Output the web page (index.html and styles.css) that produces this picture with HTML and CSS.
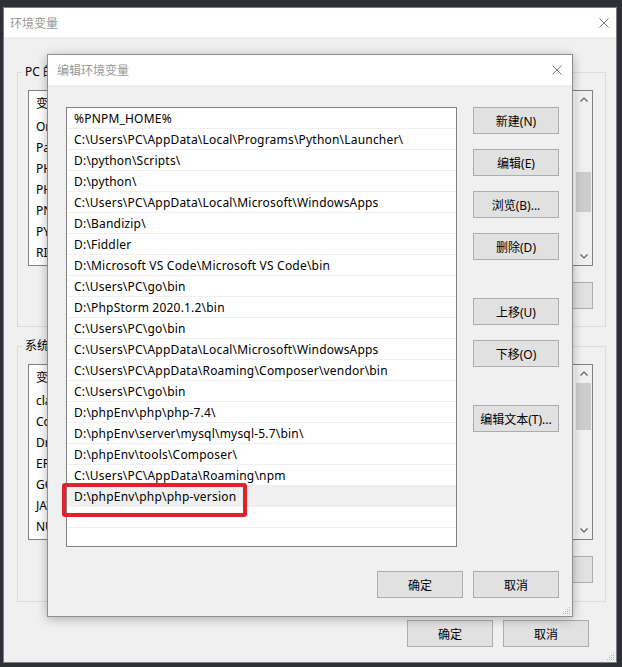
FILE: index.html
```html
<!DOCTYPE html>
<html lang="zh-CN">
<head>
  <meta charset="UTF-8">
  <meta name="viewport" content="width=device-width, initial-scale=1.0">
  <title>环境变量</title>
  <link rel="stylesheet" href="styles.css">
</head>
<body>
<div class="desktop">

  <!-- 环境变量 主窗口 -->
  <div class="window main-window">
    <div class="titlebar">
      <span class="title">环境变量</span>
      <span class="close">
        <svg width="10" height="10" viewBox="0 0 10 10"><path d="M0.5 0.5L9.5 9.5M9.5 0.5L0.5 9.5" stroke="#7a7a7a" stroke-width="1"/></svg>
      </span>
    </div>
    <div class="window-body">
      <fieldset class="group">
        <legend>PC 的用户变量(U)</legend>
        <div class="listview">
          <div class="rows">
            <div class="vrow head">变量</div>
            <div class="vrow">OneDrive</div>
            <div class="vrow">Path</div>
            <div class="vrow">PHP</div>
            <div class="vrow">PHPSTORM</div>
            <div class="vrow">PNPM</div>
            <div class="vrow">PY</div>
            <div class="vrow">RIDER</div>
          </div>
          <div class="scrollbar">
            <span class="arrow"><svg width="8" height="5" viewBox="0 0 8 5"><path d="M0.5 4.5L4 1L7.5 4.5" fill="none" stroke="#606060" stroke-width="1.2"/></svg></span>
            <span class="track"><span class="thumb user-thumb"></span></span>
            <span class="arrow"><svg width="8" height="5" viewBox="0 0 8 5"><path d="M0.5 0.5L4 4L7.5 0.5" fill="none" stroke="#606060" stroke-width="1.2"/></svg></span>
          </div>
        </div>
        <div class="group-buttons">
          <button>新建(N)...</button>
          <button>编辑(E)...</button>
          <button>删除(D)</button>
        </div>
      </fieldset>

      <fieldset class="group system-group">
        <legend>系统变量(S)</legend>
        <div class="listview">
          <div class="rows">
            <div class="vrow head">变量</div>
            <div class="vrow">classpath</div>
            <div class="vrow">ComSpec</div>
            <div class="vrow">DriverData</div>
            <div class="vrow">ERLANG</div>
            <div class="vrow">GOPATH</div>
            <div class="vrow">JAVA</div>
            <div class="vrow">NUMBER</div>
          </div>
          <div class="scrollbar">
            <span class="arrow"><svg width="8" height="5" viewBox="0 0 8 5"><path d="M0.5 4.5L4 1L7.5 4.5" fill="none" stroke="#606060" stroke-width="1.2"/></svg></span>
            <span class="track"><span class="thumb system-thumb"></span></span>
            <span class="arrow"><svg width="8" height="5" viewBox="0 0 8 5"><path d="M0.5 0.5L4 4L7.5 0.5" fill="none" stroke="#606060" stroke-width="1.2"/></svg></span>
          </div>
        </div>
        <div class="group-buttons">
          <button>新建(W)...</button>
          <button>编辑(I)...</button>
          <button>删除(L)</button>
        </div>
      </fieldset>

      <div class="dialog-buttons outer-buttons">
        <button>确定</button>
        <button>取消</button>
      </div>
    </div>
    <span class="grip">
      <svg width="10" height="10" viewBox="0 0 10 10" fill="#b4b4b4"><rect x="8" y="2" width="1" height="1"/><rect x="6" y="4" width="1" height="1"/><rect x="8" y="4" width="1" height="1"/><rect x="4" y="6" width="1" height="1"/><rect x="6" y="6" width="1" height="1"/><rect x="8" y="6" width="1" height="1"/><rect x="2" y="8" width="1" height="1"/><rect x="4" y="8" width="1" height="1"/><rect x="6" y="8" width="1" height="1"/><rect x="8" y="8" width="1" height="1"/></svg>
    </span>
  </div>

  <!-- 编辑环境变量 对话框 -->
  <div class="window edit-dialog">
    <div class="titlebar">
      <span class="title">编辑环境变量</span>
      <span class="close">
        <svg width="10" height="10" viewBox="0 0 10 10"><path d="M0.5 0.5L9.5 9.5M9.5 0.5L0.5 9.5" stroke="#7a7a7a" stroke-width="1"/></svg>
      </span>
    </div>
    <div class="dialog-body">
      <div class="path-list">
        <div class="prow">%PNPM_HOME%</div>
        <div class="prow">C:\Users\PC\AppData\Local\Programs\Python\Launcher\</div>
        <div class="prow">D:\python\Scripts\</div>
        <div class="prow">D:\python\</div>
        <div class="prow">C:\Users\PC\AppData\Local\Microsoft\WindowsApps</div>
        <div class="prow">D:\Bandizip\</div>
        <div class="prow">D:\Fiddler</div>
        <div class="prow">D:\Microsoft VS Code\Microsoft VS Code\bin</div>
        <div class="prow">C:\Users\PC\go\bin</div>
        <div class="prow">D:\PhpStorm 2020.1.2\bin</div>
        <div class="prow">C:\Users\PC\go\bin</div>
        <div class="prow">C:\Users\PC\AppData\Local\Microsoft\WindowsApps</div>
        <div class="prow">C:\Users\PC\AppData\Roaming\Composer\vendor\bin</div>
        <div class="prow">C:\Users\PC\go\bin</div>
        <div class="prow">D:\phpEnv\php\php-7.4\</div>
        <div class="prow">D:\phpEnv\server\mysql\mysql-5.7\bin\</div>
        <div class="prow">D:\phpEnv\tools\Composer\</div>
        <div class="prow">C:\Users\PC\AppData\Roaming\npm</div>
        <div class="prow selected">D:\phpEnv\php\php-version<span class="mark"></span></div>
        <div class="prow"></div>
        <div class="prow"></div>
      </div>

      <div class="side-buttons">
        <button>新建(N)</button>
        <button>编辑(E)</button>
        <button>浏览(B)...</button>
        <button>删除(D)</button>
        <button class="sep">上移(U)</button>
        <button>下移(O)</button>
        <button class="sep">编辑文本(T)...</button>
      </div>

      <div class="dialog-buttons inner-buttons">
        <button>确定</button>
        <button>取消</button>
      </div>
    </div>
    <span class="grip">
      <svg width="10" height="10" viewBox="0 0 10 10" fill="#b4b4b4"><rect x="8" y="2" width="1" height="1"/><rect x="6" y="4" width="1" height="1"/><rect x="8" y="4" width="1" height="1"/><rect x="4" y="6" width="1" height="1"/><rect x="6" y="6" width="1" height="1"/><rect x="8" y="6" width="1" height="1"/><rect x="2" y="8" width="1" height="1"/><rect x="4" y="8" width="1" height="1"/><rect x="6" y="8" width="1" height="1"/><rect x="8" y="8" width="1" height="1"/></svg>
    </span>
  </div>

</div>
</body>
</html>
```

FILE: styles.css
```css
* {
  box-sizing: border-box;
}

body {
  margin: 0;
  background-color: #2e3038;
  font-family: "Noto Sans", "Noto Sans CJK SC", sans-serif;
  font-size: 12px;
  color: #000;
}

.desktop {
  position: relative;
  width: 622px;
  height: 667px;
  overflow: hidden;
}

/* 窗口通用 */
.window {
  position: absolute;
  display: flex;
  flex-direction: column;
  background-color: #f0f0f0;
}

.titlebar {
  display: flex;
  align-items: center;
  background-color: #fff;
  flex-shrink: 0;
}

.title {
  flex: 1;
  color: #999;
  font-size: 12px;
}

.close {
  display: flex;
  align-items: center;
  justify-content: center;
}

.grip {
  position: absolute;
  right: 1px;
  bottom: 1px;
  width: 10px;
  height: 10px;
  display: flex;
}

button {
  font-family: inherit;
  font-size: 12px;
  color: #000;
  background-color: #e1e1e1;
  border: 1px solid #adadad;
  height: 27px;
  width: 86px;
  padding: 0;
  margin: 0;
}

.dialog-buttons {
  display: flex;
  justify-content: flex-end;
  gap: 10px;
}

/* 主窗口 */
.main-window {
  left: 3px;
  top: 7px;
  width: 614px;
  height: 656px;
  border: 1px solid #7f7f7f;
}

.main-window .titlebar {
  height: 29px;
  padding-left: 6px;
}

.main-window .close {
  width: 24px;
}

.window-body {
  padding: 27px 10px 0 13px;
}

.group {
  margin: 0;
  padding: 10px 12px 17px 10px;
  border: 1px solid #dcdcdc;
}

.group legend {
  padding: 0 2px;
  margin-left: -5px;
  line-height: 16px;
}

.system-group {
  margin-top: 11px;
  padding-bottom: 18px;
}

.listview {
  display: flex;
  height: 176px;
  background-color: #fff;
  border: 1px solid #828282;
}

.rows {
  flex: 1;
}

.vrow {
  height: 21px;
  line-height: 21px;
  padding-left: 7px;
  white-space: nowrap;
}

.vrow.head {
  height: 25px;
  line-height: 25px;
}

.scrollbar {
  width: 17px;
  display: flex;
  flex-direction: column;
  background-color: #f0f0f0;
}

.arrow {
  height: 17px;
  display: flex;
  align-items: center;
  justify-content: center;
}

.track {
  flex: 1;
  padding: 0 1px;
}

.thumb {
  display: block;
  background-color: #cdcdcd;
}

.user-thumb {
  margin-top: 64px;
  height: 40px;
}

.system-thumb {
  margin-top: 1px;
  height: 47px;
}

.group-buttons {
  display: flex;
  justify-content: flex-end;
  gap: 10px;
  margin-top: 16px;
}

.outer-buttons {
  margin-top: 18px;
  margin-right: 17px;
}

/* 编辑环境变量 */
.edit-dialog {
  left: 47px;
  top: 54px;
  width: 526px;
  height: 563px;
  border: 1px solid #8e8e8e;
  box-shadow: 0 2px 10px rgba(0, 0, 0, 0.28);
}

.edit-dialog .titlebar {
  height: 30px;
  padding-left: 9px;
}

.edit-dialog .close {
  width: 30px;
}

.dialog-body {
  display: grid;
  grid-template-columns: 391px 86px;
  column-gap: 16px;
  padding: 22px 13px 0 18px;
}

.path-list {
  position: relative;
  height: 440px;
  background-color: #fff;
  border: 1px solid #828282;
}

.prow {
  position: relative;
  height: 21px;
  line-height: 21px;
  padding-left: 7px;
  border-bottom: 1px solid #f0f0f0;
  white-space: nowrap;
  letter-spacing: 0.2px;
}

.prow.selected {
  background-color: #f0f0f0;
}

.mark {
  position: absolute;
  left: -5px;
  top: -3px;
  width: 185px;
  height: 34px;
  border: 4px solid #e3202b;
  border-radius: 3px;
}

.side-buttons {
  display: flex;
  flex-direction: column;
  gap: 15px;
}

.side-buttons .sep {
  margin-top: 23px;
}

.inner-buttons {
  grid-column: 1 / -1;
  margin-top: 24px;
}
```
